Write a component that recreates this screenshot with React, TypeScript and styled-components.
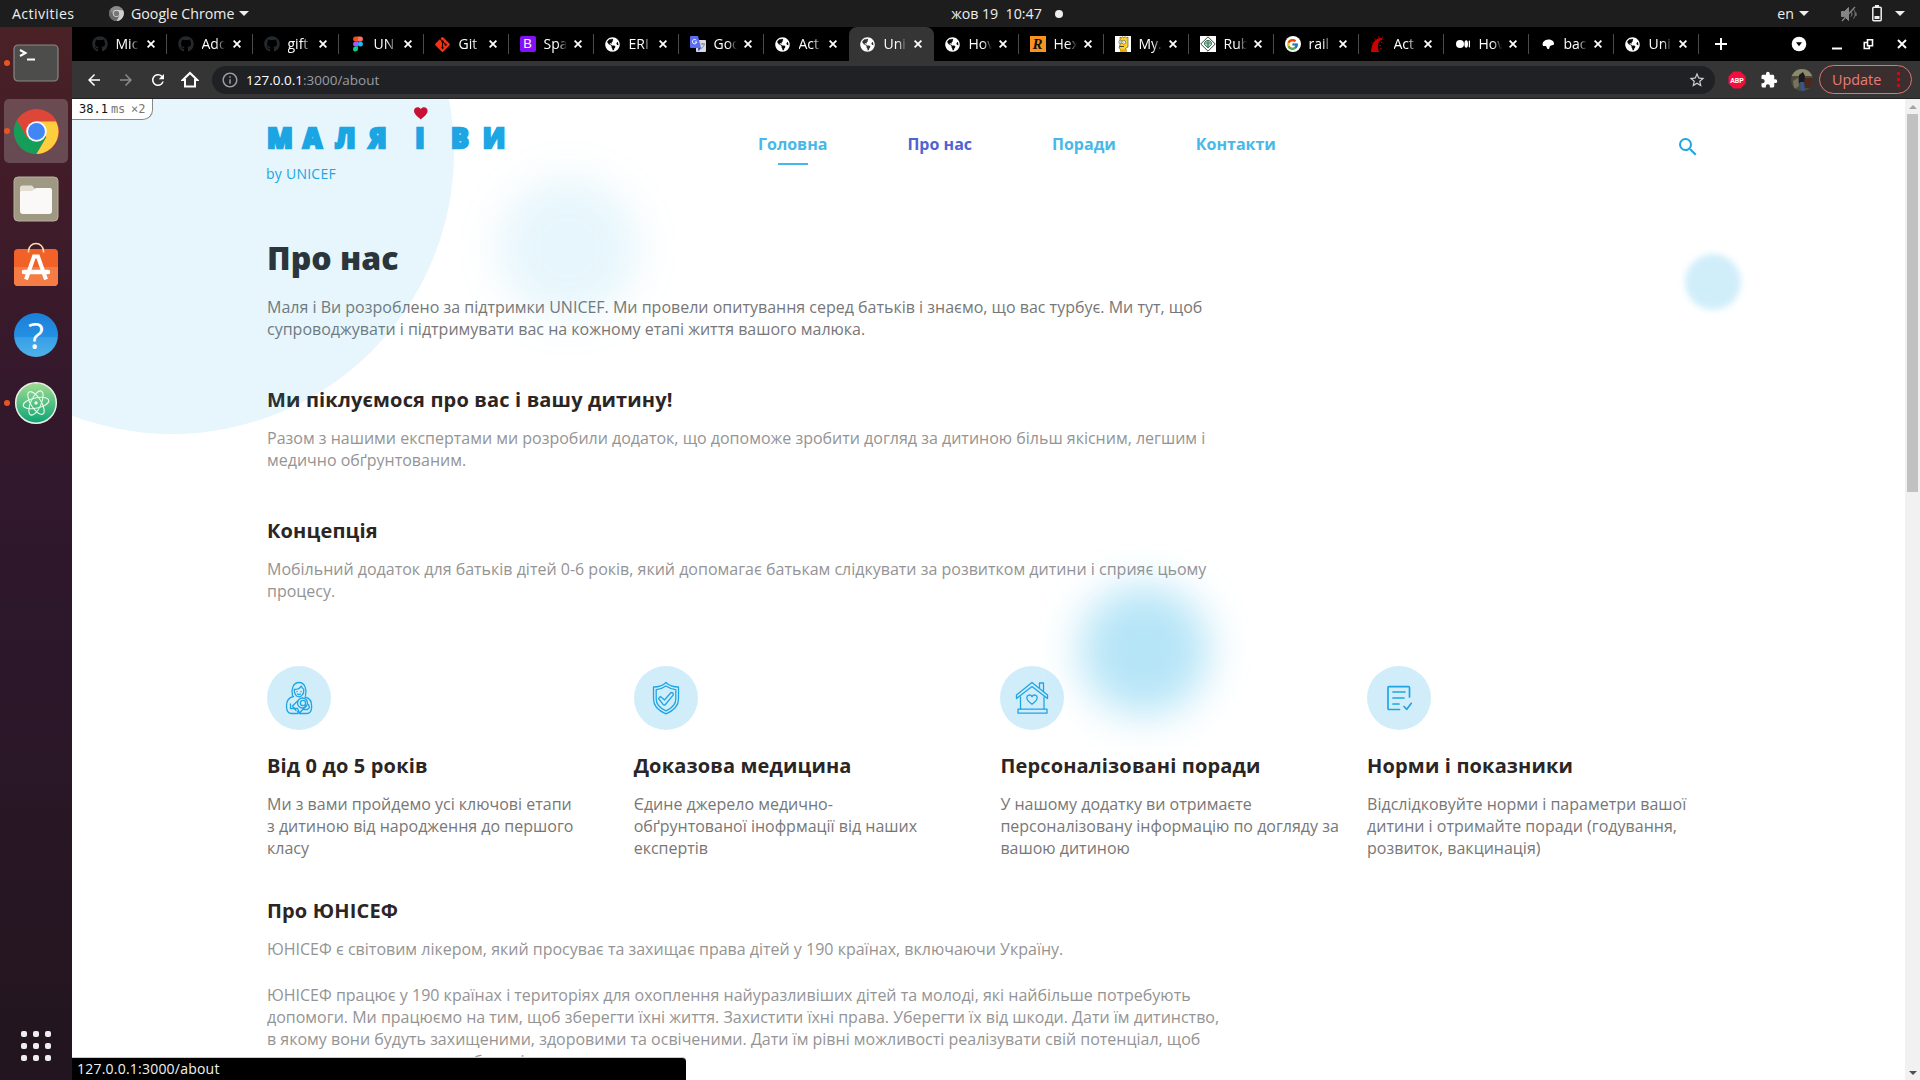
import React from "react";
import styled, { createGlobalStyle } from "styled-components";
import { FaGithub, FaGitAlt, FaGlobeAmericas } from "react-icons/fa";
import { FcGoogle } from "react-icons/fc";
import {
  MdArrowBack,
  MdArrowForward,
  MdRefresh,
  MdStarBorder,
  MdExtension,
  MdSearch,
  MdInfoOutline,
} from "react-icons/md";

const Global = createGlobalStyle`
  * { box-sizing: border-box; }
  html, body { margin: 0; padding: 0; background: #000; overflow: hidden; }
  h1, h3, p { margin: 0; }
  svg { display: block; flex: none; }
`;

const UI = `"Open Sans", "Noto Sans", sans-serif`;
const BLUE = "#1ea5e4";

/* ---------- desktop shell ---------- */

const Desktop = styled.div`
  width: 1920px;
  height: 1080px;
  display: flex;
  flex-direction: column;
  overflow: hidden;
  font-family: ${UI};
`;

const TopBar = styled.header`
  height: 27px;
  flex: none;
  background: #1d1d1d;
  color: #eee;
  display: grid;
  grid-template-columns: 1fr auto 1fr;
  align-items: center;
  padding: 0 15px 0 12px;
  font-size: 14.2px;
  line-height: 27px;
  white-space: pre;
`;

const BarGroup = styled.div<{ $end?: boolean }>`
  display: flex;
  align-items: center;
  justify-content: ${(p) => (p.$end ? "flex-end" : "flex-start")};
`;

const BarText = styled.span<{ $left?: number; $track?: number; $width?: number }>`
  margin-left: ${(p) => p.$left ?? 0}px;
  letter-spacing: ${(p) => p.$track ?? 0}px;
  width: ${(p) => (p.$width ? `${p.$width}px` : "auto")};
`;

const Caret = styled.i<{ $left: number }>`
  margin-left: ${(p) => p.$left}px;
  border: 5px solid transparent;
  border-bottom: 0;
  border-top-color: #eee;
`;

const Clock = styled.div`
  display: flex;
  align-items: center;
  gap: 13px;
  padding-left: 97px;
`;

const NoticeDot = styled.i`
  width: 8px;
  height: 8px;
  border-radius: 50%;
  background: #eee;
`;

const Workspace = styled.div`
  flex: 1;
  min-height: 0;
  display: flex;
`;

const Dock = styled.nav`
  width: 72px;
  flex: none;
  padding: 4px 4px 19px;
  display: flex;
  flex-direction: column;
  gap: 4px;
  background: linear-gradient(#4a2125 0, #431d28 130px, #34182c 360px, #2d172b 600px, #23151f 1000px);
`;

const DockItem = styled.div<{ $active?: boolean; $running?: boolean }>`
  position: relative;
  width: 64px;
  height: 64px;
  border-radius: 5px;
  display: flex;
  align-items: center;
  justify-content: center;
  background: ${(p) => (p.$active ? "rgba(255,255,255,0.2)" : "none")};
  &::before {
    content: "";
    display: ${(p) => (p.$running ? "block" : "none")};
    position: absolute;
    left: -0.5px;
    top: 29px;
    width: 6px;
    height: 6px;
    border-radius: 50%;
    background: #e95420;
  }
`;

const AppsGrid = styled.div`
  margin: auto auto 0;
  display: grid;
  grid-template-columns: repeat(3, 6px);
  gap: 6px;
  i {
    width: 6px;
    height: 6px;
    border-radius: 2px;
    background: #eee;
  }
`;

/* ---------- browser chrome ---------- */

const Browser = styled.div`
  flex: 1;
  min-width: 0;
  display: flex;
  flex-direction: column;
  position: relative;
`;

const TabStrip = styled.div`
  height: 34px;
  flex: none;
  background: #000;
  display: flex;
  padding-left: 9px;
`;

const Tab = styled.div<{ $active?: boolean; $line?: boolean; $wide?: boolean }>`
  position: relative;
  width: ${(p) => (p.$wide ? 86 : 85)}px;
  flex: none;
  padding: 0 12px 0 10.5px;
  display: flex;
  align-items: center;
  background: ${(p) => (p.$active ? "#353535" : "none")};
  border-radius: 8px 8px 0 0;
  color: #fff;
  &::after {
    content: "";
    display: ${(p) => (p.$line ? "block" : "none")};
    position: absolute;
    right: 0;
    top: 7px;
    width: 1px;
    height: 20px;
    background: #4a4a4a;
  }
`;

const Favicon = styled.span`
  width: 16px;
  display: flex;
  justify-content: center;
`;

const TabTitle = styled.span`
  width: 23px;
  margin-left: 8px;
  overflow: hidden;
  white-space: nowrap;
  font-size: 14px;
  line-height: 20px;
  mask-image: linear-gradient(90deg, #000 60%, transparent 100%);
`;

const CloseWrap = styled.span`
  margin-left: auto;
`;

const WindowControls = styled.div`
  margin-left: auto;
  width: 221px;
  display: flex;
  align-items: center;
`;

const Toolbar = styled.div`
  height: 38px;
  flex: none;
  background: #353535;
  border-bottom: 1px solid #232326;
  display: flex;
  align-items: center;
  padding: 0 8px 0 13px;
  color: #fff;
`;

const NavButtons = styled.div`
  display: flex;
  gap: 14px;
  width: 127px;
  align-items: center;
`;

const AddressBar = styled.div`
  width: 1503px;
  height: 28px;
  border-radius: 14px;
  background: #202124;
  display: flex;
  align-items: center;
  padding: 0 9px 0 9px;
  color: #9a9da1;
  font-size: 13.5px;
`;

const Url = styled.span`
  flex: 1;
  margin-left: 7px;
  line-height: 28px;
  b {
    font-weight: 400;
    color: #fff;
  }
`;

const Extensions = styled.div`
  display: flex;
  align-items: center;
  gap: 13.5px;
  margin: 0 auto 0 13px;
`;

const UpdatePill = styled.div`
  width: 93px;
  height: 29px;
  border: 1px solid #e57373;
  border-radius: 15px;
  background: #3b2e2f;
  color: #ea7b78;
  display: flex;
  align-items: center;
  justify-content: space-between;
  padding: 0 11px 0 12px;
  font-size: 14.4px;
`;

const Dots = styled.span`
  display: grid;
  gap: 3px;
  i {
    width: 3px;
    height: 3px;
    background: #e0000f;
  }
`;

/* ---------- page viewport ---------- */

const Viewport = styled.div`
  flex: 1;
  min-height: 0;
  display: flex;
  background: #fff;
`;

const Page = styled.main`
  position: relative;
  flex: 1;
  min-width: 0;
  overflow: hidden;
  padding-left: 195px;
`;

const Scrollbar = styled.div`
  width: 15px;
  background: #f1f1f1;
  display: flex;
  flex-direction: column;
  align-items: center;
  padding: 5px 0;
`;

const ScrollArrow = styled.i<{ $down?: boolean }>`
  border: 4px solid transparent;
  ${(p) =>
    p.$down
      ? "border-bottom: 0; border-top-color: #505050; margin-top: auto;"
      : "border-top: 0; border-bottom-color: #a3a3a3; margin: 1px 0 5px;"}
`;

const Thumb = styled.div`
  width: 11px;
  height: 378px;
  background: #c1c1c1;
`;

const Blob = styled.div<{ $x: number; $y: number; $r: number; $blur: number; $alpha: number }>`
  position: absolute;
  left: ${(p) => p.$x - p.$r}px;
  top: ${(p) => p.$y - p.$r}px;
  width: ${(p) => p.$r * 2}px;
  height: ${(p) => p.$r * 2}px;
  border-radius: 50%;
  background: rgba(18, 170, 228, ${(p) => p.$alpha});
  filter: ${(p) => (p.$blur ? `blur(${p.$blur}px)` : "none")};
  pointer-events: none;
`;

const Profiler = styled.div`
  position: absolute;
  left: 0;
  top: 0;
  z-index: 3;
  width: 81px;
  height: 21px;
  padding-left: 7px;
  background: #fff;
  border: 1px solid #888;
  border-width: 0 1px 1px 0;
  border-radius: 0 0 10px 0;
  font: 12px/20px "DejaVu Sans Mono", monospace;
  color: #111;
  white-space: nowrap;
  display: flex;
  span {
    color: #777;
  }
  span:first-of-type {
    margin: 0 6px 0 3px;
    letter-spacing: -0.2px;
  }
`;

const SiteHeader = styled.div`
  height: 137px;
  display: flex;
  align-items: flex-start;
`;

const Brand = styled.div`
  width: 491px;
  padding-top: 6px;
`;

const Byline = styled.div`
  margin: 9px 0 0 -1px;
  font-size: 14px;
  line-height: 20px;
  letter-spacing: 0.25px;
  color: ${BLUE};
`;

const Menu = styled.div`
  display: flex;
  gap: 80px;
  padding-top: 34px;
`;

const MenuLink = styled.a<{ $current?: boolean; $marked?: boolean }>`
  display: flex;
  flex-direction: column;
  align-items: center;
  font-size: 16px;
  line-height: 22px;
  font-weight: 700;
  color: ${(p) => (p.$current ? "#4f63d2" : "#46b8e9")};
  &::after {
    content: "";
    width: 30px;
    height: 2px;
    margin-top: 8px;
    background: ${(p) => (p.$marked ? "#46b8e9" : "none")};
  }
`;

const SearchButton = styled.div`
  margin: 36px 205px 0 auto;
  color: ${BLUE};
`;

const Title = styled.h1`
  font-size: 32px;
  line-height: 44px;
  font-weight: 800;
  color: #2e2a2a;
`;

const Heading = styled.h3<{ $top?: number }>`
  margin-top: ${(p) => p.$top ?? 0}px;
  font-size: 20px;
  line-height: 27px;
  font-weight: 700;
  letter-spacing: 0.15px;
  color: #2b2524;
  white-space: nowrap;
`;

const Text = styled.p<{ $light?: boolean; $top?: number }>`
  margin-top: ${(p) => p.$top ?? 14}px;
  font-size: 16px;
  line-height: 22px;
  color: ${(p) => (p.$light ? "#949494" : "#777")};
  white-space: pre-line;
`;

const Cards = styled.section`
  margin-top: 64px;
  display: grid;
  grid-template-columns: repeat(4, 366.7px);
`;

const Badge = styled.div`
  width: 64px;
  height: 64px;
  margin-bottom: 22px;
  border-radius: 50%;
  background: #d2edfa;
`;

const StatusBubble = styled.div`
  position: absolute;
  left: 0;
  bottom: 0;
  z-index: 4;
  width: 614px;
  height: 23px;
  padding-left: 5px;
  border-top: 1px solid #ccc;
  border-radius: 0 4px 0 0;
  background: #000;
  color: #f1f1f1;
  font-size: 14px;
  line-height: 22px;
  letter-spacing: 0.22px;
`;

/* ---------- favicons ---------- */

const Globe = () => <FaGlobeAmericas size={15} color="#fff" />;
const Hub = () => <FaGithub size={16} color="#24292e" />;

const Figma = () => (
  <svg width="16" height="16" viewBox="0 0 16 16">
    <path d="M8 .5H5.6a2.5 2.5 0 0 0 0 5H8z" fill="#f24e1e" />
    <path d="M8 .5h2.4a2.5 2.5 0 0 1 0 5H8z" fill="#ff7262" />
    <path d="M8 5.5H5.6a2.5 2.5 0 0 0 0 5H8z" fill="#a259ff" />
    <circle cx="10.4" cy="8" r="2.5" fill="#1abcfe" />
    <path d="M8 10.5H5.6A2.5 2.5 0 1 0 8 13z" fill="#0acf83" />
  </svg>
);

const LetterIcon = styled.span<{ $bg: string; $fg: string; $italic?: boolean }>`
  width: 16px;
  height: 16px;
  border-radius: ${(p) => (p.$italic ? 0 : 2)}px;
  background: ${(p) => p.$bg};
  color: ${(p) => p.$fg};
  font: ${(p) => (p.$italic ? `italic 900 15px/16px "Liberation Serif", serif` : `400 13px/16px "Liberation Sans", sans-serif`)};
  text-align: center;
`;

const Translate = () => (
  <svg width="16" height="16" viewBox="0 0 16 16">
    <rect x="6" y="4" width="10" height="12" rx="1" fill="#d8dce3" />
    <path d="M1 0h7l3 12H1a1 1 0 0 1-1-1V1a1 1 0 0 1 1-1z" fill="#5b6df0" />
    <path d="M8 12h3l-2.500 3.500z" fill="#3949ab" />
    <path d="M6.300 4.200A2.200 2.200 0 1 0 6.800 6H4.800" fill="none" stroke="#fff" />
    <path d="M10.500 8h4.500M12.700 7v1M11 12.500c2-1 3-2.500 3.200-4.500" fill="none" stroke="#7d8694" />
  </svg>
);

const Bart = () => (
  <svg width="16" height="16" viewBox="0 0 16 16">
    <rect width="16" height="16" fill="#fff" />
    <path d="M5 1l1.300 1L7.500.6 8.800 1.800 10.200.6l1.200 1.200L13 1v10l-2.500 1.500.5 3.500H6l-.5-3L4 12l1-3z" fill="#fbd227" stroke="#5a4a10" strokeWidth=".6" />
    <circle cx="5.500" cy="6" r="1.700" fill="#fff" stroke="#333" strokeWidth=".5" />
    <circle cx="8.800" cy="6.200" r="1.900" fill="#fff" stroke="#333" strokeWidth=".5" />
    <path d="M5.400 6h.6M8.600 6h.6M4.500 10.500h4.500" stroke="#222" strokeWidth=".8" />
    <path d="M5 13.500h7V16H5z" fill="#e8a51d" />
  </svg>
);

const RubyGuide = () => (
  <svg width="16" height="16" viewBox="0 0 16 16">
    <rect width="16" height="16" fill="#fff" />
    <path d="M8 .8L15.200 8 8 15.200.8 8z" fill="#fff" stroke="#444" />
    <path d="M4.500 6.500L6.500 4.500h3l2 2v2L8 12 4.500 8.500z" fill="#9fd3bb" stroke="#2d6b50" strokeWidth=".9" />
    <path d="M5 7h6M7 5l1 6 1-6" stroke="#2d6b50" strokeWidth=".6" fill="none" />
  </svg>
);

const GoogleRound = styled.span`
  width: 16px;
  height: 16px;
  border-radius: 50%;
  background: #fff;
  display: grid;
  place-items: center;
`;

const Rails = () => (
  <svg width="16" height="16" viewBox="0 0 16 16">
    <path d="M1 16C1.500 9 4 3 10 2c2 0 3 .6 4 1.500-4-.2-6 2.500-6 6.500 0 2.500.4 4 1 6z" fill="#c00" />
    <path d="M1.500 6.500l1.200.8M4.500 2.500l1 1M8.500.3l.4 1.200M13 .8l-.5 1M11 6l1.500.5M9.500 9.500h1.500M10 13l1.500-.5" stroke="#c00" />
  </svg>
);

const Medium = () => (
  <svg width="16" height="16" viewBox="0 0 16 16">
    <circle cx="5" cy="8" r="4" fill="#fff" />
    <ellipse cx="11.200" cy="8" rx="1.800" ry="3.800" fill="#fff" />
    <rect x="13.800" y="4.600" width="1.200" height="6.800" rx=".6" fill="#fff" />
  </svg>
);

const Spade = () => (
  <svg width="16" height="16" viewBox="0 0 16 16">
    <path d="M3 10C1.500 6.500 4.500 3.500 8.500 3.500c4 0 6 2.500 5.500 5l-4 1.500-1 3H7.500L6 10z" fill="#fff" />
  </svg>
);

const Cross = () => (
  <svg width="8" height="8" viewBox="0 0 8 8">
    <path d="M.6.6l6.800 6.800M7.400.6L.6 7.400" stroke="#fff" strokeWidth="1.800" />
  </svg>
);

const tabs: { title: string; icon: React.ReactNode; active?: boolean }[] = [
  { title: "Mic", icon: <Hub /> },
  { title: "Add", icon: <Hub /> },
  { title: "gift", icon: <Hub /> },
  { title: "UN", icon: <Figma /> },
  { title: "Git", icon: <FaGitAlt size={17} color="#f8300d" /> },
  { title: "Spa", icon: <LetterIcon $bg="#8512f7" $fg="#fff">B</LetterIcon> },
  { title: "ERI", icon: <Globe /> },
  { title: "Goo", icon: <Translate /> },
  { title: "Act", icon: <Globe /> },
  { title: "Uni", icon: <Globe />, active: true },
  { title: "Hov", icon: <Globe /> },
  { title: "Hex", icon: <LetterIcon $bg="#f7931e" $fg="#111" $italic>R</LetterIcon> },
  { title: "My.", icon: <Bart /> },
  { title: "Rub", icon: <RubyGuide /> },
  { title: "rail", icon: <GoogleRound><FcGoogle size={13} /></GoogleRound> },
  { title: "Act", icon: <Rails /> },
  { title: "Hov", icon: <Medium /> },
  { title: "bac", icon: <Spade /> },
  { title: "Uni", icon: <Globe /> },
];

/* ---------- dock icons ---------- */

const Terminal = () => (
  <svg width="46" height="46" viewBox="0 0 46 46">
    <rect x="1" y="5" width="44" height="36" rx="4" fill="#4d4d4b" stroke="#8a8986" strokeWidth="1.200" />
    <path d="M7 10l5.500 3L7 16" fill="none" stroke="#fff" strokeWidth="2" />
    <path d="M14 19.500h8" stroke="#fff" strokeWidth="2" />
  </svg>
);

const ChromeLogo = ({ size, mono }: { size: number; mono?: boolean }) => (
  <svg width={size} height={size} viewBox="0 0 48 48">
    <circle cx="24" cy="24" r="24" fill={mono ? "#8a8a8a" : "#de4738"} />
    <path d="M3.200 12A24 24 0 0 0 24 48l10.400-18L24 34 13.600 30z" fill={mono ? "#6a6a6a" : "#149e5a"} />
    <path d="M24 48A24 24 0 0 0 44.800 13.200H24L34.400 30z" fill={mono ? "#d0d0d0" : "#ffce3f"} />
    <circle cx="24" cy="24" r="11" fill={mono ? "#e8e8e8" : "#f4f6fa"} />
    <circle cx="24" cy="24" r="9" fill={mono ? "#777" : "#4285f4"} />
  </svg>
);

const Files = () => (
  <svg width="46" height="46" viewBox="0 0 46 46">
    <rect x="1" y="1" width="44" height="44" rx="4" fill="#9f9882" stroke="#b7b19e" />
    <path d="M7 12a2.500 2.500 0 0 1 2.500-2.500H19l3 3.500h8v8H7z" fill="#e2ded2" />
    <path d="M7 17a2 2 0 0 1 2-2h10l4-3h14a2 2 0 0 1 2 2v21a3 3 0 0 1-3 3H10a3 3 0 0 1-3-3z" fill="#faf9f7" />
  </svg>
);

const Store = () => (
  <svg width="46" height="46" viewBox="0 0 46 46" overflow="visible">
    <rect x="1" y="5" width="44" height="37" rx="4" fill="#f26228" />
    <path d="M1 23h44v15a4 4 0 0 1-4 4H5a4 4 0 0 1-4-4z" fill="#f67c45" />
    <path d="M15.500 8.500V7a7.500 7.500 0 0 1 15 0v1.500" fill="none" stroke="#f7dcae" strokeWidth="1.600" />
    <path d="M13 35.500l8-23h4l8 23" fill="none" stroke="#fff" strokeWidth="4" />
    <path d="M11 28h24" stroke="#fff" strokeWidth="4.500" strokeLinecap="round" />
  </svg>
);

const HelpCircle = styled.div`
  width: 44px;
  height: 44px;
  border-radius: 50%;
  background: linear-gradient(#1b7fdb, #2490e2 54%, #379fe6 55%, #4fb1ec);
  color: #fff;
  font: 400 37px/43px "Open Sans", sans-serif;
  text-align: center;
`;

const Atom = () => (
  <svg width="44" height="44" viewBox="0 0 44 44">
    <defs>
      <linearGradient id="atomFill" x1="0" y1="0" x2="0" y2="1">
        <stop offset="0" stopColor="#a3dc92" />
        <stop offset="1" stopColor="#0aa574" />
      </linearGradient>
    </defs>
    <circle cx="22" cy="22" r="20.300" fill="url(#atomFill)" stroke="#e9efe9" strokeWidth="1.500" />
    <g fill="none" stroke="#e8fbea" strokeWidth="1.100">
      <ellipse cx="22" cy="22" rx="13" ry="5.200" transform="rotate(-12 22 22)" />
      <ellipse cx="22" cy="22" rx="13" ry="5.200" transform="rotate(58 22 22)" />
      <ellipse cx="22" cy="22" rx="13" ry="5.200" transform="rotate(-66 22 22)" />
    </g>
    <circle cx="22" cy="22" r="1.700" fill="#e8fbea" />
  </svg>
);

const Indicators = () => (
  <svg width="74" height="20" viewBox="0 0 74 20">
    <g stroke="#858585" fill="none">
      <path d="M32.500 7.500h3l4-4v13l-4-4h-3z" fill="#858585" />
      <path d="M42 7.500c1.300 1.500 1.300 3.500 0 5M44.500 5.500c2.300 2.700 2.300 6.300 0 9M47 8.500v3.500" />
      <path d="M33 17L46 3" strokeWidth="1.300" />
    </g>
    <rect x="63.800" y="3.300" width="8.400" height="13.400" rx="1" fill="none" stroke="#eee" strokeWidth="1.500" />
    <path d="M66 2h4" stroke="#eee" strokeWidth="2" />
    <path d="M65.500 12h5v3h-5z" fill="#eee" />
  </svg>
);

/* ---------- site drawings ---------- */

const LogoText = styled.text`
  font-family: "Open Sans", sans-serif;
  font-weight: 800;
  font-size: 29px;
  fill: ${BLUE};
  stroke: ${BLUE};
  stroke-width: 2.4px;
`;

const Logo = () => (
  <svg width="240" height="50" viewBox="0 0 240 50">
    <g transform="scale(.92 1)">
      <LogoText x="0 38.800 74.300 110.300 161.200 200 234.500" y="43.100">МАЛЯІВИ</LogoText>
    </g>
    <path d="M153.800 14.500c-3.500-3-6.800-5.500-6.800-8.700C147 2 151.800.8 153.800 4c2-3.200 6.800-2 6.800 1.800 0 3.200-3.300 5.700-6.800 8.700z" fill="#dd0022" />
  </svg>
);

const Line = styled.svg.attrs({ width: 64, height: 64, viewBox: "0 0 64 64" })<{ $weight?: number }>`
  fill: none;
  stroke: ${BLUE};
  stroke-width: ${(p) => p.$weight ?? 1.3};
  stroke-linecap: round;
  stroke-linejoin: round;
`;

const Mother = () => (
  <Line>
    <path d="M25.500 29.500c-1.500-5 .2-13 6.500-13s8 8 6.500 13" />
    <path d="M27.300 23.500c3.500 0 6-1.500 7-3.500 .8 2 1.800 3 2.500 3.500 .2 4-1.800 7.300-4.800 7.300s-4.900-3.300-4.700-7.300z" />
    <path d="M30 25.500v.2M34 25.500v.2M30.500 28c1 .8 2 .8 3 0" />
    <path d="M26.500 30.500c-5 1-7 4.500-7 9.500 0 5.500 1.500 7.500 5 7.500h6l1.500-2-1.500-3h-6" />
    <path d="M38 31c5 1 6.700 4 6.700 9.500 0 5-1.700 7-5 7h-7.500l7-8" />
    <circle cx="35.500" cy="37" r="5" />
    <circle cx="36" cy="37" r="2.600" />
    <path d="M30.500 35l-5 5 3.500 4.500M23.500 38v4.500M41.500 38.500l1 3-2 2h-4M30.500 45.500l2.500 2" />
  </Line>
);

const Shield = () => (
  <Line>
    <path d="M32 16.500c3 3 7.500 4.500 12.500 4.500v12c0 7.500-5.500 12-12.500 14.800C25 45 19.500 40.500 19.500 33V21c5 0 9.500-1.500 12.500-4.500z" />
    <path d="M32 20c2.800 2 6 3.200 9.800 3.600V33c0 5.500-4 9.300-9.800 11.800C26.200 42.300 22.200 38.500 22.200 33v-9.400C26 23.200 29.200 22 32 20z" />
    <path d="M24.500 32.500l2-2 4 3.500 6.500-7.500 2 .3.300 2L31 39l-1.500-.2z" />
  </Line>
);

const House = () => (
  <Line>
    <path d="M20.500 31v12M44 31v12" />
    <path d="M18 43.200h29v4H18z" />
    <path d="M16.500 29L32 16.500 47.500 29v3.500L32 20.500 16.500 32.500z" />
    <path d="M39.500 22v-5h4v8.500" />
    <path d="M32 38.300c-3-2.200-5.200-4.200-5.200-6.500 0-3 3.700-3.800 5.200-1.200 1.500-2.600 5.200-1.800 5.200 1.200 0 2.300-2.200 4.300-5.200 6.500z" />
  </Line>
);

const Checklist = () => (
  <Line $weight={1.7}>
    <path d="M32.500 43.500H22a1 1 0 0 1-1-1V21.700a1 1 0 0 1 1-1h19.500a1 1 0 0 1 1 1V31" />
    <path d="M26 26h12M26 32h11M26 38h6" />
    <path d="M37 40.500l2.800 2.800 4.500-6" />
  </Line>
);

const cards = [
  { icon: <Mother />, title: "Від 0 до 5 років", text: "Ми з вами пройдемо усі ключові етапи\nз дитиною від народження до першого\nкласу" },
  { icon: <Shield />, title: "Доказова медицина", text: "Єдине джерело медично-\nобґрунтованої інофрмації від наших\nекспертів" },
  { icon: <House />, title: "Персоналізовані поради", text: "У нашому додатку ви отримаєте\nперсоналізовану інформацію по догляду за\nвашою дитиною" },
  { icon: <Checklist />, title: "Норми і показники", text: "Відслідковуйте норми і параметри вашої\nдитини і отримайте поради (годування,\nрозвиток, вакцинація)" },
];

const Controls = () => (
  <WindowControls>
    <svg width="221" height="34" viewBox="0 0 221 34" fill="none" stroke="#fff">
      <path d="M16 17h12M22 11v12" strokeWidth="2" />
      <circle cx="100" cy="17" r="7.300" fill="#fff" stroke="none" />
      <path d="M97 15.200h6l-3 4z" fill="#000" stroke="none" />
      <path d="M133 21.500h10" strokeWidth="2" />
      <path d="M168.500 12.700h5v6h-5zM168 15.500h-2.700v6h5V19" strokeWidth="1.600" />
      <path d="M199 13l8 8M207 13l-8 8" strokeWidth="1.900" />
    </svg>
  </WindowControls>
);

export default function App() {
  return (
    <Desktop>
      <Global />
      <TopBar>
        <BarGroup>
          <BarText $track={0.4} $width={97}>Activities</BarText>
          <ChromeLogo size={15} mono />
          <BarText $left={7}>Google Chrome</BarText>
          <Caret $left={5} />
        </BarGroup>
        <Clock>
          <span>жов 19  10:47</span>
          <NoticeDot />
        </Clock>
        <BarGroup $end>
          <BarText>en</BarText>
          <Caret $left={5} />
          <Indicators />
          <Caret $left={12} />
        </BarGroup>
      </TopBar>
      <Workspace>
        <Dock>
          <DockItem $running><Terminal /></DockItem>
          <DockItem $active $running><ChromeLogo size={45} /></DockItem>
          <DockItem><Files /></DockItem>
          <DockItem><Store /></DockItem>
          <DockItem><HelpCircle>?</HelpCircle></DockItem>
          <DockItem $running><Atom /></DockItem>
          <AppsGrid>
            {Array.from({ length: 9 }, (_, i) => <i key={i} />)}
          </AppsGrid>
        </Dock>
        <Browser>
          <TabStrip>
            {tabs.map((t, i) => (
              <Tab key={i} $wide={i < 3} $active={t.active} $line={!t.active && !tabs[i + 1]?.active}>
                <Favicon>{t.icon}</Favicon>
                <TabTitle>{t.title}</TabTitle>
                <CloseWrap><Cross /></CloseWrap>
              </Tab>
            ))}
            <Controls />
          </TabStrip>
          <Toolbar>
            <NavButtons>
              <MdArrowBack size={18} />
              <MdArrowForward size={18} color="#8b8b8b" />
              <MdRefresh size={18} />
              <svg width="18" height="18" viewBox="0 0 18 18">
                <path d="M4 15.500V9H1.800L9 2l7.200 7H14v6.500z" fill="none" stroke="#fff" strokeWidth="2" />
              </svg>
            </NavButtons>
            <AddressBar>
              <MdInfoOutline size={18} />
              <Url><b>127.0.0.1</b>:3000/about</Url>
              <MdStarBorder size={18} color="#d0d0d0" />
            </AddressBar>
            <Extensions>
              <svg width="18" height="18" viewBox="0 0 18 18">
                <path d="M5.500.5h7l5 5v7l-5 5h-7l-5-5v-7z" fill="#f40d3f" />
                <text x="9" y="11.500" textAnchor="middle" fill="#fff" fontSize="7" fontWeight="700" fontFamily="Roboto">ABP</text>
              </svg>
              <MdExtension size={18} />
              <svg width="22" height="22" viewBox="0 0 22 22">
                <defs><clipPath id="face"><circle cx="11" cy="11" r="11" /></clipPath></defs>
                <g clipPath="url(#face)">
                  <rect width="22" height="22" fill="#4c4a3c" />
                  <path d="M0 0h22v7H0z" fill="#8d8a6c" />
                  <path d="M13 9h9v10h-9z" fill="#4a2a20" />
                  <path d="M8 6l4-3 2 4-1 7H8z" fill="#1c1a1c" />
                  <path d="M9 13h4l1 9H10z" fill="#33568f" />
                  <path d="M2 12l5-3 1 8-5 4z" fill="#77725c" />
                </g>
              </svg>
            </Extensions>
            <UpdatePill>
              Update
              <Dots><i /><i /><i /></Dots>
            </UpdatePill>
          </Toolbar>
          <Viewport>
            <Page>
              <SiteHeader>
                <Brand>
                  <Logo />
                  <Byline>by UNICEF</Byline>
                </Brand>
                <Menu>
                  <MenuLink $marked>Головна</MenuLink>
                  <MenuLink $current>Про нас</MenuLink>
                  <MenuLink>Поради</MenuLink>
                  <MenuLink>Контакти</MenuLink>
                </Menu>
                <SearchButton><MdSearch size={24} /></SearchButton>
              </SiteHeader>
              <Title>Про нас</Title>
              <Text $top={16}>{"Маля і Ви розроблено за підтримки UNICEF. Ми провели опитування серед батьків і знаємо, що вас турбує. Ми тут, щоб\nсупроводжувати і підтримувати вас на кожному етапі життя вашого малюка."}</Text>
              <Heading $top={46}>Ми піклуємося про вас і вашу дитину!</Heading>
              <Text $light>{"Разом з нашими експертами ми розробили додаток, що допоможе зробити догляд за дитиною більш якісним, легшим і\nмедично обґрунтованим."}</Text>
              <Heading $top={46}>Концепція</Heading>
              <Text $light>{"Мобільний додаток для батьків дітей 0-6 років, який допомагає батькам слідкувати за розвитком дитини і сприяє цьому\nпроцесу."}</Text>
              <Cards>
                {cards.map((c) => (
                  <div key={c.title}>
                    <Badge>{c.icon}</Badge>
                    <Heading>{c.title}</Heading>
                    <Text>{c.text}</Text>
                  </div>
                ))}
              </Cards>
              <Heading $top={38}>Про ЮНІСЕФ</Heading>
              <Text $light>ЮНІСЕФ є світовим лікером, який просуває та захищає права дітей у 190 країнах, включаючи Україну.</Text>
              <Text $light $top={24}>{"ЮНІСЕФ працює у 190 країнах і територіях для охоплення найуразливіших дітей та молоді, які найбільше потребують\nдопомоги. Ми працюємо на тим, щоб зберегти їхні життя. Захистити їхні права. Уберегти їх від шкоди. Дати їм дитинство,\nв якому вони будуть захищеними, здоровими та освіченими. Дати їм рівні можливості реалізувати свій потенціал, щоб\nвони змогли використати блага і"}</Text>
              <Blob $x={100} $y={53} $r={282} $blur={0} $alpha={0.1} />
              <Blob $x={496} $y={149} $r={70} $blur={21} $alpha={0.105} />
              <Blob $x={1072} $y={551} $r={65} $blur={20} $alpha={0.31} />
              <Blob $x={1641} $y={183} $r={28} $blur={3} $alpha={0.2} />
              <Profiler>38.1<span>ms</span><span>×2</span></Profiler>
            </Page>
            <Scrollbar>
              <ScrollArrow />
              <Thumb />
              <ScrollArrow $down />
            </Scrollbar>
          </Viewport>
          <StatusBubble>127.0.0.1:3000/about</StatusBubble>
        </Browser>
      </Workspace>
    </Desktop>
  );
}
